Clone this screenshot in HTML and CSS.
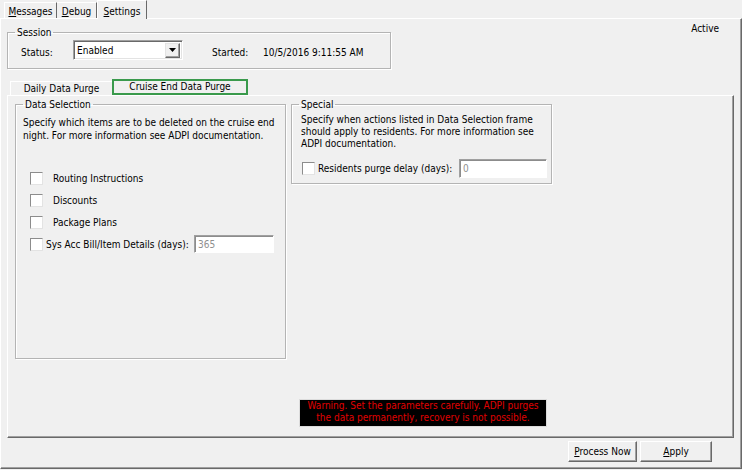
FILE: index.html
```html
<!DOCTYPE html>
<html lang="en">
<head>
    <meta charset="UTF-8">
    <title>Purge Settings</title>
    <link rel="stylesheet" href="styles.css">
</head>
<body>
    <div class="window">
        <div class="tabstrip">
            <div class="tab tab-messages"><u>M</u>essages</div>
            <div class="tab tab-debug"><u>D</u>ebug</div>
            <div class="tab tab-settings tab-active"><u>S</u>ettings</div>
        </div>

        <div class="page">
            <div class="top-row">
                <fieldset class="group session">
                    <legend>Session</legend>
                    <div class="session-body">
                        <span class="lbl status-lbl">Status:</span>
                        <div class="combo">
                            <span class="combo-text">Enabled</span>
                            <span class="combo-btn">
                                <svg width="7" height="4" viewBox="0 0 7 4"><path d="M0 0h7L3.5 4z" fill="#000"/></svg>
                            </span>
                        </div>
                        <span class="lbl started-lbl">Started:</span>
                        <span class="lbl">10/5/2016 9:11:55 AM</span>
                    </div>
                </fieldset>
                <span class="state">Active</span>
            </div>

            <div class="subtabs">
                <div class="subtab subtab-daily">Daily Data Purge</div>
                <div class="subtab subtab-cruise">Cruise End Data Purge</div>
            </div>

            <div class="subpanel">
                <div class="groups">
                    <fieldset class="group data-sel">
                        <legend>Data Selection</legend>
                        <div class="group-body ds-body">
                            <p class="note">Specify which items are to be deleted on the cruise end<br>night. For more information see ADPI documentation.</p>
                            <div class="check-list">
                                <label class="check-row"><input type="checkbox" class="chk"><span class="chk-lbl">Routing Instructions</span></label>
                                <label class="check-row"><input type="checkbox" class="chk"><span class="chk-lbl">Discounts</span></label>
                                <label class="check-row"><input type="checkbox" class="chk"><span class="chk-lbl">Package Plans</span></label>
                                <div class="check-row">
                                    <input type="checkbox" class="chk"><span class="chk-lbl chk-lbl-near">Sys Acc Bill/Item Details (days):</span>
                                    <input type="text" class="field field-days" value="365">
                                </div>
                            </div>
                        </div>
                    </fieldset>

                    <fieldset class="group special">
                        <legend>Special</legend>
                        <div class="group-body sp-body">
                            <p class="note note-sp">Specify when actions listed in Data Selection frame<br>should apply to residents. For more information see<br>ADPI documentation.</p>
                            <div class="check-row sp-row">
                                <input type="checkbox" class="chk"><span class="chk-lbl chk-lbl-near">Residents purge delay (days):</span>
                                <input type="text" class="field field-delay" value="0">
                            </div>
                        </div>
                    </fieldset>
                </div>

                <div class="warning">Warning. Set the parameters carefully. ADPI purges<br>the data permanently, recovery is not possible.</div>
            </div>

            <div class="buttons">
                <button class="btn btn-process"><u>P</u>rocess Now</button>
                <button class="btn btn-apply"><u>A</u>pply</button>
            </div>
        </div>
    </div>
</body>
</html>
```

FILE: styles.css
```css
body {
    margin: 0;
    background-color: #f0f0f0;
    font-family: "DejaVu Sans Condensed", "Liberation Sans", Arial, sans-serif;
    font-size: 10px;
    color: #000;
}

.window {
    width: 742px;
    height: 470px;
    overflow: hidden;
    background-color: #f0f0f0;
}

/* top tab strip */
.tabstrip {
    display: flex;
    height: 18px;
    padding-left: 4px;
}

.tab {
    box-sizing: border-box;
    height: 16px;
    margin-top: 2px;
    padding-top: 2px;
    line-height: 13px;
    text-align: center;
    white-space: nowrap;
    border-top: 1px solid #fff;
    border-left: 1px solid #fff;
    border-right: 1px solid #696969;
}

.tab-messages { width: 53px; }
.tab-debug { width: 40px; border-left: none; }

.tab-settings {
    width: 50px;
    height: 19px;
    margin-top: 0;
    margin-bottom: -1px;
    padding-top: 4px;
    position: relative;
    z-index: 1;
    background-color: #f0f0f0;
}

.page {
    box-sizing: border-box;
    height: 451px;
    border: 1px solid;
    border-color: #fff #696969 #696969 #fff;
    box-shadow: inset -1px -1px #a0a0a0;
    display: flex;
    flex-direction: column;
}

.top-row {
    display: flex;
    align-items: flex-start;
}

/* group boxes */
.group {
    box-sizing: border-box;
    margin: 0;
    padding: 0;
    min-width: 0;
    border: 1px solid #b4b4b4;
    box-shadow: inset 1px 1px #fff, 1px 1px #fff;
}

.group legend {
    margin-left: 7px;
    padding: 0 2px;
    line-height: 13px;
}

.session {
    width: 384px;
    height: 43px;
    margin: 7px 0 0 6px;
}

.session-body {
    display: flex;
    align-items: flex-end;
    padding: 1px 0 0 13px;
}

.lbl {
    line-height: 13px;
    padding-bottom: 1px;
    white-space: nowrap;
}

.status-lbl { width: 52px; }

.started-lbl {
    width: 51px;
    margin-left: 29px;
}

.combo {
    box-sizing: border-box;
    width: 110px;
    height: 20px;
    display: flex;
    align-items: center;
    justify-content: space-between;
    background-color: #fff;
    border: 1px solid;
    border-color: #a0a0a0 #fff #fff #a0a0a0;
    box-shadow: inset 1px 1px #696969, inset -1px -1px #e3e3e3;
    padding: 0 2px 0 3px;
}

.combo-btn {
    box-sizing: border-box;
    width: 15px;
    height: 15px;
    display: flex;
    align-items: center;
    justify-content: center;
    background-color: #f0f0f0;
    border: 1px solid;
    border-color: #e3e3e3 #696969 #696969 #e3e3e3;
    box-shadow: inset -1px -1px #a0a0a0;
}

.state {
    margin: 3px 22px 0 auto;
    line-height: 13px;
}

/* inner tabs */
.subtabs {
    display: flex;
    height: 16px;
    margin: 10px 0 0 9px;
}

.subtab {
    box-sizing: border-box;
    text-align: center;
    white-space: nowrap;
}

.subtab-daily {
    width: 102px;
    height: 14px;
    margin-top: 2px;
    line-height: 13px;
    border-left: 1px solid #fff;
    border-top: 1px solid #fff;
}

.subtab-cruise {
    width: 136px;
    height: 16px;
    line-height: 12px;
    border: 2px solid #3a9a4c;
    background-color: #f0f0f0;
    position: relative;
    z-index: 1;
}

.subpanel {
    box-sizing: border-box;
    width: 727px;
    height: 343px;
    margin-left: 6px;
    border: 1px solid;
    border-color: #fff #696969 #696969 #fff;
    box-shadow: inset -1px -1px #a0a0a0;
    display: flex;
    flex-direction: column;
}

.groups {
    display: flex;
    align-items: flex-start;
    gap: 5px;
    margin: 2px 0 0 7px;
}

.data-sel {
    width: 271px;
    height: 261px;
}

.special {
    width: 261px;
    height: 86px;
}

.note {
    margin: 0;
    line-height: 13px;
    white-space: nowrap;
}

.ds-body { padding: 0 7px; }
.ds-body .note { margin-top: 5px; }

.sp-body { padding: 0 0 0 9px; }
.note-sp {
    margin-top: 3px;
    line-height: 12px;
}

.check-list {
    margin-top: 25px;
}

.check-row {
    display: flex;
    align-items: center;
    height: 22px;
}

.chk {
    appearance: none;
    box-sizing: border-box;
    flex-shrink: 0;
    width: 13px;
    height: 13px;
    margin: 0 0 0 7px;
    background-color: #fff;
    border: 1px solid;
    border-color: #8c8c8c #e3e3e3 #e3e3e3 #8c8c8c;
}

.chk-lbl {
    margin-left: 10px;
    line-height: 13px;
    white-space: nowrap;
}

.chk-lbl-near { margin-left: 3px; }

.field {
    box-sizing: border-box;
    flex-shrink: 0;
    height: 18px;
    margin: 0 4px 0 auto;
    padding: 0 3px;
    font: inherit;
    color: #8f8f8f;
    background-color: #fff;
    border: 1px solid;
    border-color: #a0a0a0 #fff #fff #a0a0a0;
    box-shadow: inset 1px 1px #8c8c8c;
    outline: none;
}

.field-days { width: 80px; }

.sp-row {
    height: 19px;
    margin-top: 9px;
}

.sp-row .chk { margin-left: 1px; }

.field-delay {
    width: 88px;
    height: 19px;
}

.warning {
    box-sizing: border-box;
    width: 248px;
    height: 28px;
    margin: 40px 0 0 291px;
    background-color: #000;
    border: 1px solid #dcdcdc;
    color: #e00000;
    line-height: 12px;
    text-align: center;
    white-space: nowrap;
}

/* bottom buttons */
.buttons {
    display: flex;
    justify-content: flex-end;
    gap: 3px;
    margin: 3px 29px 0 0;
}

.btn {
    box-sizing: border-box;
    height: 21px;
    padding: 0;
    font: inherit;
    white-space: nowrap;
    color: #000;
    background-color: #f0f0f0;
    border: 1px solid;
    border-color: #fff #696969 #696969 #fff;
    box-shadow: inset -1px -1px #a0a0a0;
}

.btn-process { width: 69px; }
.btn-apply { width: 72px; }
```
